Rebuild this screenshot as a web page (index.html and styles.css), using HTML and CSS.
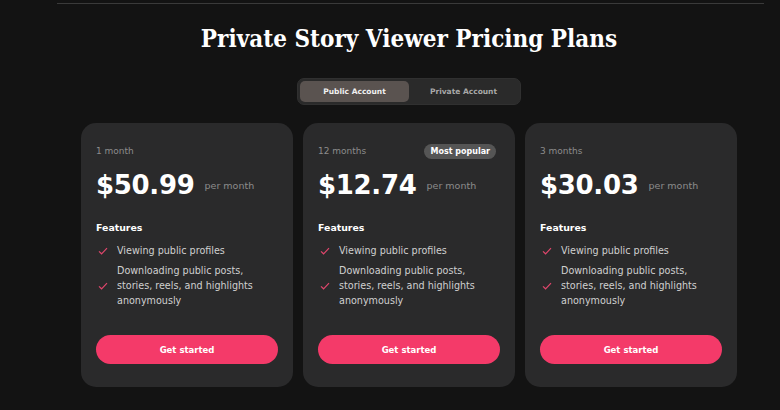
FILE: index.html
```html
<!DOCTYPE html>
<html lang="en">
<head>
    <meta charset="UTF-8">
    <meta name="viewport" content="width=device-width, initial-scale=1.0">
    <title>Private Story Viewer Pricing Plans</title>
    <link rel="stylesheet" href="styles.css">
</head>
<body>
    <div class="topline"></div>

    <section class="pricing">
        <h1>Private Story Viewer Pricing Plans</h1>

        <div class="toggle">
            <button class="tab active">Public Account</button>
            <button class="tab">Private Account</button>
        </div>

        <div class="plans">
            <div class="card">
                <div class="card-head">
                    <span class="period">1 month</span>
                </div>
                <div class="price-row">
                    <span class="price">$50.99</span>
                    <span class="per">per month</span>
                </div>
                <h4>Features</h4>
                <ul class="features">
                    <li><svg class="check" viewBox="0 0 12 10"><path d="M1 5.5 L4.2 8.5 L11 1.5"/></svg><span>Viewing public profiles</span></li>
                    <li><svg class="check" viewBox="0 0 12 10"><path d="M1 5.5 L4.2 8.5 L11 1.5"/></svg><span>Downloading public posts, stories, reels, and highlights anonymously</span></li>
                </ul>
                <button class="cta">Get started</button>
            </div>

            <div class="card">
                <div class="card-head">
                    <span class="period">12 months</span>
                    <span class="badge">Most popular</span>
                </div>
                <div class="price-row">
                    <span class="price">$12.74</span>
                    <span class="per">per month</span>
                </div>
                <h4>Features</h4>
                <ul class="features">
                    <li><svg class="check" viewBox="0 0 12 10"><path d="M1 5.5 L4.2 8.5 L11 1.5"/></svg><span>Viewing public profiles</span></li>
                    <li><svg class="check" viewBox="0 0 12 10"><path d="M1 5.5 L4.2 8.5 L11 1.5"/></svg><span>Downloading public posts, stories, reels, and highlights anonymously</span></li>
                </ul>
                <button class="cta">Get started</button>
            </div>

            <div class="card">
                <div class="card-head">
                    <span class="period">3 months</span>
                </div>
                <div class="price-row">
                    <span class="price">$30.03</span>
                    <span class="per">per month</span>
                </div>
                <h4>Features</h4>
                <ul class="features">
                    <li><svg class="check" viewBox="0 0 12 10"><path d="M1 5.5 L4.2 8.5 L11 1.5"/></svg><span>Viewing public profiles</span></li>
                    <li><svg class="check" viewBox="0 0 12 10"><path d="M1 5.5 L4.2 8.5 L11 1.5"/></svg><span>Downloading public posts, stories, reels, and highlights anonymously</span></li>
                </ul>
                <button class="cta">Get started</button>
            </div>
        </div>
    </section>
</body>
</html>
```

FILE: styles.css
```css
body {
    margin: 0;
    background: #131313;
    font-family: "DejaVu Sans", sans-serif;
    color: #fff;
    height: 410px;
    overflow: hidden;
}

.topline {
    height: 1px;
    margin: 3px 16px 0 57px;
    background: #3a3a3a;
}

.pricing {
    display: flex;
    flex-direction: column;
    align-items: center;
    padding-left: 38px;
}

h1 {
    font-family: "DejaVu Serif", serif;
    font-stretch: condensed;
    font-weight: bold;
    font-size: 24px;
    line-height: 30px;
    margin: 20px 0 0;
}

.toggle {
    display: flex;
    margin-top: 24px;
    padding: 2px;
    background: #2a2a2a;
    border-radius: 7px;
    border: 1px solid #303030;
}

.tab {
    width: 109px;
    height: 21px;
    border: 0;
    border-radius: 5px;
    background: transparent;
    color: #a8a8a8;
    font-family: inherit;
    font-size: 7.5px;
    font-weight: 600;
}

.tab.active {
    background: #5a5350;
    color: #f0f0f0;
}

.plans {
    display: flex;
    gap: 10px;
    margin-top: 18px;
}

.card {
    width: 212px;
    height: 264px;
    box-sizing: border-box;
    padding: 19px 15px 0;
    background: #2a2a2b;
    border-radius: 15px;
    display: flex;
    flex-direction: column;
}

.card-head {
    display: flex;
    justify-content: space-between;
    align-items: center;
    height: 18px;
}

.period {
    font-size: 9px;
    color: #8c8c8c;
}

.badge {
    background: #555;
    color: #fff;
    font-size: 8px;
    font-weight: 700;
    padding: 3px 6px;
    border-radius: 10px;
    margin-right: 4px;
}

.price-row {
    display: flex;
    align-items: center;
    margin-top: 9px;
    height: 32px;
}

.price {
    font-size: 26px;
    font-weight: 700;
    letter-spacing: -0.3px;
}

.per {
    font-size: 9.5px;
    color: #8c8c8c;
    margin-left: 10px;
}

h4 {
    font-size: 9.4px;
    font-weight: 700;
    margin: 21px 0 0;
}

.features {
    list-style: none;
    margin: 10px 0 0;
    padding: 0 8px 0 0;
    font-size: 9.6px;
    line-height: 15px;
    color: #d0d0d0;
}

.features li {
    display: flex;
    align-items: center;
    margin-bottom: 5px;
}

.check {
    width: 10px;
    height: 8px;
    flex: none;
    margin: 0 9px 0 2px;
    fill: none;
    stroke: #e0466c;
    stroke-width: 1.5;
}

.cta {
    margin-top: auto;
    margin-bottom: 23px;
    height: 29px;
    border: 0;
    border-radius: 15px;
    background: #f43a69;
    color: #fff;
    font-family: inherit;
    font-size: 8.5px;
    font-weight: 700;
}
```
